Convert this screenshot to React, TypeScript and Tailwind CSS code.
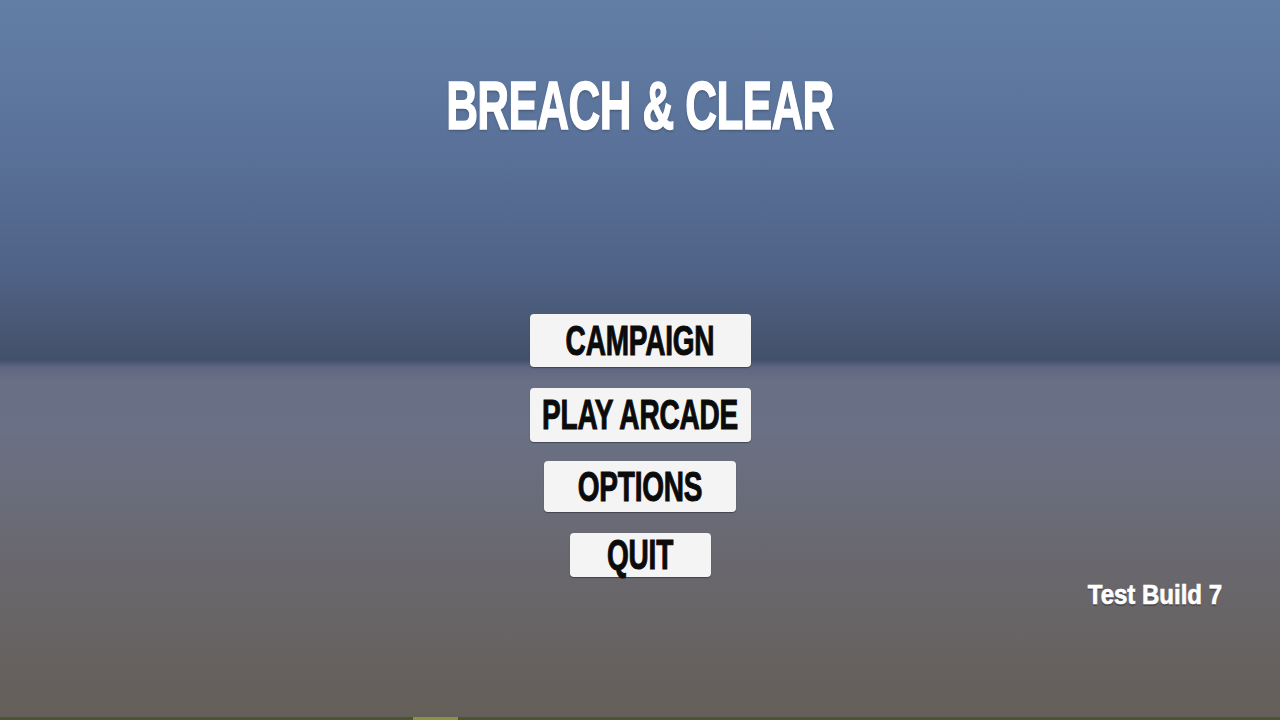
const menuItems = [
  { label: "CAMPAIGN", size: "w-[221px] h-[53px]" },
  { label: "PLAY ARCADE", size: "w-[221px] h-[54px] mt-[21px]" },
  { label: "OPTIONS", size: "w-[192px] h-[51px] mt-[19px]" },
  { label: "QUIT", size: "w-[141px] h-[44px] mt-[21px]" },
];

function MenuButton({ label, size }: { label: string; size: string }) {
  return (
    <button
      className={`${size} flex items-center justify-center rounded-[4px] bg-[#f4f4f4] shadow-[0_1px_1px_rgba(20,20,30,0.45)]`}
    >
      <span className="block whitespace-nowrap scale-y-[1.5] text-[28px] leading-none font-bold tracking-[-0.2px] text-[#0b0b0b] [-webkit-text-stroke:0.7px_#0b0b0b]">
        {label}
      </span>
    </button>
  );
}

export default function App() {
  return (
    <div
      className="relative w-full h-[720px] overflow-hidden flex flex-col items-center font-['Liberation_Sans_Narrow','Liberation_Sans',sans-serif] bg-[linear-gradient(to_bottom,#637ea5_0%,#5a7299_20%,#4f6287_38%,#47556f_47%,#43506c_50%,#5e6780_51%,#697086_53%,#6a7085_60%,#69676c_80%,#655f5a_99%)]"
    >
      <h1 className="mt-[84px] whitespace-nowrap scale-y-[1.55] text-[44px] leading-none font-bold tracking-[-0.6px] text-white [-webkit-text-stroke:1px_white] [text-shadow:0_1px_2px_rgba(20,30,50,0.35)]">
        BREACH &amp; CLEAR
      </h1>

      <div className="mt-[186px] flex flex-col items-center">
        {menuItems.map((item) => (
          <MenuButton key={item.label} label={item.label} size={item.size} />
        ))}
      </div>

      <div className="w-full flex justify-end pr-[58px] mt-[6px]">
        <span className="whitespace-nowrap scale-y-[1.18] text-[24px] leading-none font-bold text-white [-webkit-text-stroke:0.6px_white] [text-shadow:0_1px_1px_rgba(0,0,0,0.3)]">
          Test Build 7
        </span>
      </div>

      {/* ground edge along the bottom */}
      <div className="mt-auto w-full h-[3px] flex bg-[#4d5530]">
        <div className="ml-[413px] w-[45px] h-full bg-[#8a9440]" />
      </div>
    </div>
  );
}
